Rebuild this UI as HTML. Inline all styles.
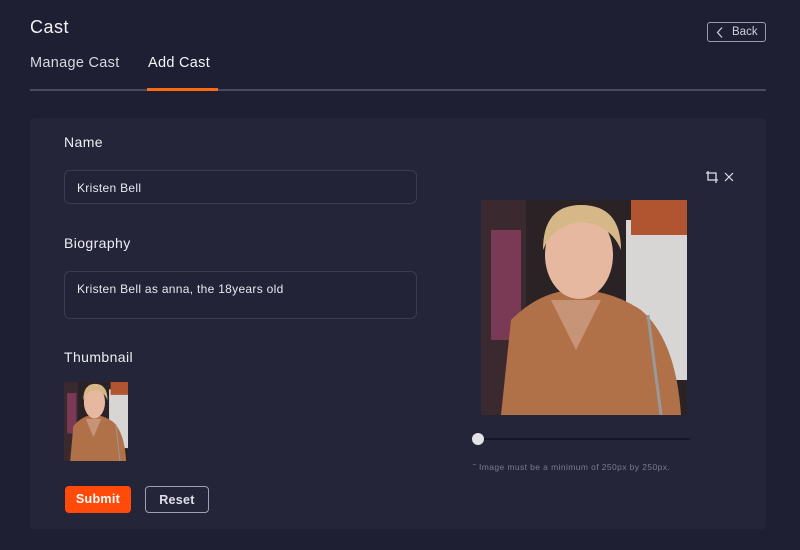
<!DOCTYPE html>
<html><head><style>
*{margin:0;padding:0;box-sizing:border-box}
body{width:800px;height:550px;background:#1e1f32;font-family:"Liberation Sans",sans-serif;color:#e6e6ee;position:relative;overflow:hidden}
.a{position:absolute}
h1{position:absolute;left:30px;top:17px;font-size:18px;font-weight:normal;color:#f2f2f5;letter-spacing:0.5px}
.tab{position:absolute;top:55px;font-size:14.5px;color:#d8d8e2;letter-spacing:0.3px}
.line{position:absolute;left:30px;top:89px;width:736px;height:2px;background:#4a4b60}
.act{position:absolute;left:147px;top:88px;width:71px;height:3px;background:#ff6b12}
.back{position:absolute;left:707px;top:22px;width:59px;height:20px;border:1px solid #9a9bb0;border-radius:3px;font-size:11.5px;color:#d0d0dc;padding:3px 0 0 24px}
.card{position:absolute;left:30px;top:118px;width:736px;height:411px;background:#242539;border-radius:4px}
.lbl{position:absolute;left:64px;font-size:14px;color:#eeeef4;letter-spacing:0.4px}
.inp{position:absolute;left:64px;width:353px;border:1px solid #3b3c54;border-radius:6px;background:#222337;font-size:12px;color:#e8e8f0;padding:10px 12px;letter-spacing:0.3px}
.btn{position:absolute;top:486px;height:27px;border-radius:4px;font-size:12.5px;font-weight:bold;text-align:center;line-height:26px;letter-spacing:0.3px}
</style></head><body>
<h1>Cast</h1>
<div class="back"><svg class="a" style="left:8px;top:4px" width="8" height="11" viewBox="0 0 8 11"><path d="M6 0.5L1.5 5.5L6 10.5" stroke="#d0d0dc" fill="none" stroke-width="1.2"/></svg>Back</div>
<div class="tab" style="left:30px">Manage Cast</div>
<div class="tab" style="left:148px;color:#f4f4f8">Add Cast</div>
<div class="line"></div><div class="act"></div>
<div class="card"></div>
<div class="lbl" style="top:134px">Name</div>
<div class="inp" style="top:170px;height:34px">Kristen Bell</div>
<div class="lbl" style="top:235px">Biography</div>
<div class="inp" style="top:271px;height:48px;padding-top:10px">Kristen Bell as anna, the 18years old</div>
<div class="lbl" style="top:349px">Thumbnail</div>
<svg width="0" height="0" style="position:absolute"><defs>
<symbol id="p" viewBox="0 0 206 215" preserveAspectRatio="none">
<rect width="206" height="215" fill="#2a2224"/>
<rect x="0" y="0" width="45" height="215" fill="#3a2a30"/>
<rect x="10" y="30" width="30" height="110" fill="#7a3a55"/>
<rect x="145" y="20" width="61" height="160" fill="#d8d6d4"/>
<rect x="150" y="0" width="56" height="35" fill="#b05530"/>
<path d="M20 215 L30 120 Q60 90 95 90 Q130 90 160 110 Q195 140 200 215Z" fill="#b07048"/>
<path d="M70 100 L95 150 L120 100Z" fill="#c89478"/>
<ellipse cx="98" cy="55" rx="34" ry="44" fill="#e6b8a0"/>
<path d="M62 50 Q62 5 100 5 Q140 5 140 50 Q130 25 100 22 Q72 25 62 50Z" fill="#d6b788"/>
<path d="M167 115 L180 215" stroke="#999" stroke-width="3"/>
</symbol></defs></svg>
<svg class="a" style="left:64px;top:382px" width="64" height="79"><use href="#p" width="64" height="79"/></svg>
<svg class="a" style="left:481px;top:200px" width="206" height="215"><use href="#p" width="206" height="215"/></svg>
<svg class="a" style="left:705px;top:170px" width="30" height="14" viewBox="0 0 30 14"><path d="M3 1V10H13M1 3H11V13" stroke="#e0e0e8" fill="none" stroke-width="1.3"/><path d="M20 3L28 11M28 3L20 11" stroke="#e0e0e8" stroke-width="1.2"/></svg>
<div class="a" style="left:478px;top:438px;width:212px;height:2px;background:#15162a"></div>
<div class="a" style="left:472px;top:433px;width:12px;height:12px;border-radius:50%;background:#e4e4e8"></div>
<div class="a" style="left:473px;top:462px;font-size:8.5px;color:#7a7b90;letter-spacing:0.4px">˜ Image must be a minimum of 250px by 250px.</div>
<div class="btn" style="left:65px;width:66px;background:#ff4a0a;color:#fff">Submit</div>
<div class="btn" style="left:145px;width:64px;border:1px solid #a0a0b4;color:#e0e0ea">Reset</div>
</body></html>
